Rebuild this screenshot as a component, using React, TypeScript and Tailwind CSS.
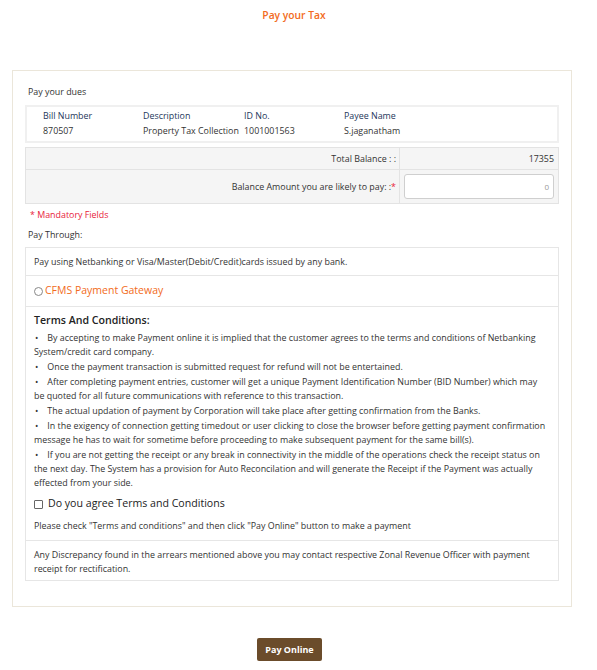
import React from 'react';

// line breaks follow the original page's wrapping
const terms: string[][] = [
  ['By accepting to make Payment online it is implied that the customer agrees to the terms and conditions of Netbanking', 'System/credit card company.'],
  ['Once the payment transaction is submitted request for refund will not be entertained.'],
  ['After completing payment entries, customer will get a unique Payment Identification Number (BID Number) which may', 'be quoted for all future communications with reference to this transaction.'],
  ['The actual updation of payment by Corporation will take place after getting confirmation from the Banks.'],
  ['In the exigency of connection getting timedout or user clicking to close the browser before getting payment confirmation', 'message he has to wait for sometime before proceeding to make subsequent payment for the same bill(s).'],
  [
    'If you are not getting the receipt or any break in connectivity in the middle of the operations check the receipt status on',
    'the next day. The System has a provision for Auto Reconcilation and will generate the Receipt if the Payment was actually',
    'effected from your side.',
  ],
];

export default function App() {
  return (
    <div className="w-[597px] min-h-[670px] bg-white text-[#333] text-[8.9px] font-['Open_Sans',sans-serif]">
      {/* page title */}
      <div className="h-[32px] flex items-center justify-center pr-[9px] text-[10.3px] font-semibold text-[#f26b21]">Pay your Tax</div>

      <div className="mt-[38px] ml-[12px] w-[560px] border border-[#ebe6da] px-[12px] pt-[14px] pb-[25px]">
        <div className="pl-[3px] h-[14px] leading-[14px]">Pay your dues</div>

        {/* bill details */}
        <div className="mt-[6px] border-2 border-[#f0f0f0] h-[38px] pl-[16px] pt-[1px]">
          <div className="flex h-[15px] items-center text-[#24365a] font-medium">
            <span className="w-[100px]">Bill Number</span>
            <span className="w-[101px]">Description</span>
            <span className="w-[100px]">ID No.</span>
            <span>Payee Name</span>
          </div>
          <div className="flex h-[15px] items-center">
            <span className="w-[100px]">870507</span>
            <span className="w-[101px]">Property Tax Collection</span>
            <span className="w-[100px]">1001001563</span>
            <span>S.jaganatham</span>
          </div>
        </div>

        {/* balance */}
        <div className="mt-[4px] border border-[#e3e3e3] bg-[#f5f5f5]">
          <div className="flex h-[22px] border-b border-[#e3e3e3]">
            <div className="w-[374px] border-r border-[#e3e3e3] flex items-center justify-end pr-[3px]">Total Balance : :</div>
            <div className="flex-1 flex items-center justify-end pr-[4px]">17355</div>
          </div>
          <div className="flex h-[33px]">
            <div className="w-[374px] border-r border-[#e3e3e3] flex items-center justify-end pr-[3px]">
              Balance Amount you are likely to pay: :<span className="text-[#e8213a]">*</span>
            </div>
            <div className="flex-1 flex items-center pl-[4px] pr-[4px]">
              <div className="w-full h-[25px] bg-white border border-[#cfcfcf] rounded-[3px] flex items-center justify-end pr-[4px] text-[8px] text-[#999]">0</div>
            </div>
          </div>
        </div>

        <div className="mt-[4px] pl-[5px] h-[14px] leading-[14px] text-[#e8213a]">* Mandatory Fields</div>
        <div className="mt-[6px] pl-[3px] h-[14px] leading-[14px]">Pay Through:</div>

        {/* payment box */}
        <div className="mt-[5px] border border-[#e6e6e6]">
          <div className="h-[28px] pl-[8px] pr-[3px] flex items-center border-b border-[#e6e6e6]">
            Pay using Netbanking or Visa/Master(Debit/Credit)cards issued by any bank.
          </div>
          <div className="h-[31px] pl-[8px] flex items-center gap-[2px] border-b border-[#e6e6e6]">
            <span className="w-[9px] h-[9px] rounded-full border border-[#888] bg-white" />
            <span className="text-[10.5px] text-[#f26b21]">CFMS Payment Gateway</span>
          </div>
          <div className="pl-[8px] pr-0 pt-[5px] pb-[7px] border-b border-[#e6e6e6]">
            <div className="text-[10.6px] font-semibold text-[#222] leading-[16px]">Terms And Conditions:</div>
            <div className="mt-[3px] flex flex-col gap-[1px] leading-[14px]">
              {terms.map((lines, i) => (
                <p key={i} className="whitespace-nowrap">
                  <span className="pl-[1px] pr-[9px]">•</span>
                  {lines.map((l, j) => (
                    <React.Fragment key={j}>
                      {j > 0 && <br />}
                      {l}
                    </React.Fragment>
                  ))}
                </p>
              ))}
            </div>
            <div className="mt-[6px] flex items-center gap-[5px] h-[16px]">
              <span className="w-[9px] h-[9px] border border-[#666] rounded-[1px] bg-white" />
              <span className="text-[10.6px] font-medium text-[#222]">Do you agree Terms and Conditions</span>
            </div>
            <div className="mt-[7px] leading-[14px]">
              Please check "Terms and conditions" and then click "Pay Online" button to make a payment
            </div>
          </div>
          <div className="pl-[8px] pr-[3px] pt-[7px] pb-[4px] leading-[14px]">
            Any Discrepancy found in the arrears mentioned above you may contact respective Zonal Revenue Officer with payment
            <br />
            receipt for rectification.
          </div>
        </div>
      </div>

      <div className="mt-[31px] pl-[257px]">
        <button className="w-[65px] h-[23px] bg-[#6b4c2b] rounded-[2px] text-white font-bold text-[9px]">Pay Online</button>
      </div>
    </div>
  );
}
